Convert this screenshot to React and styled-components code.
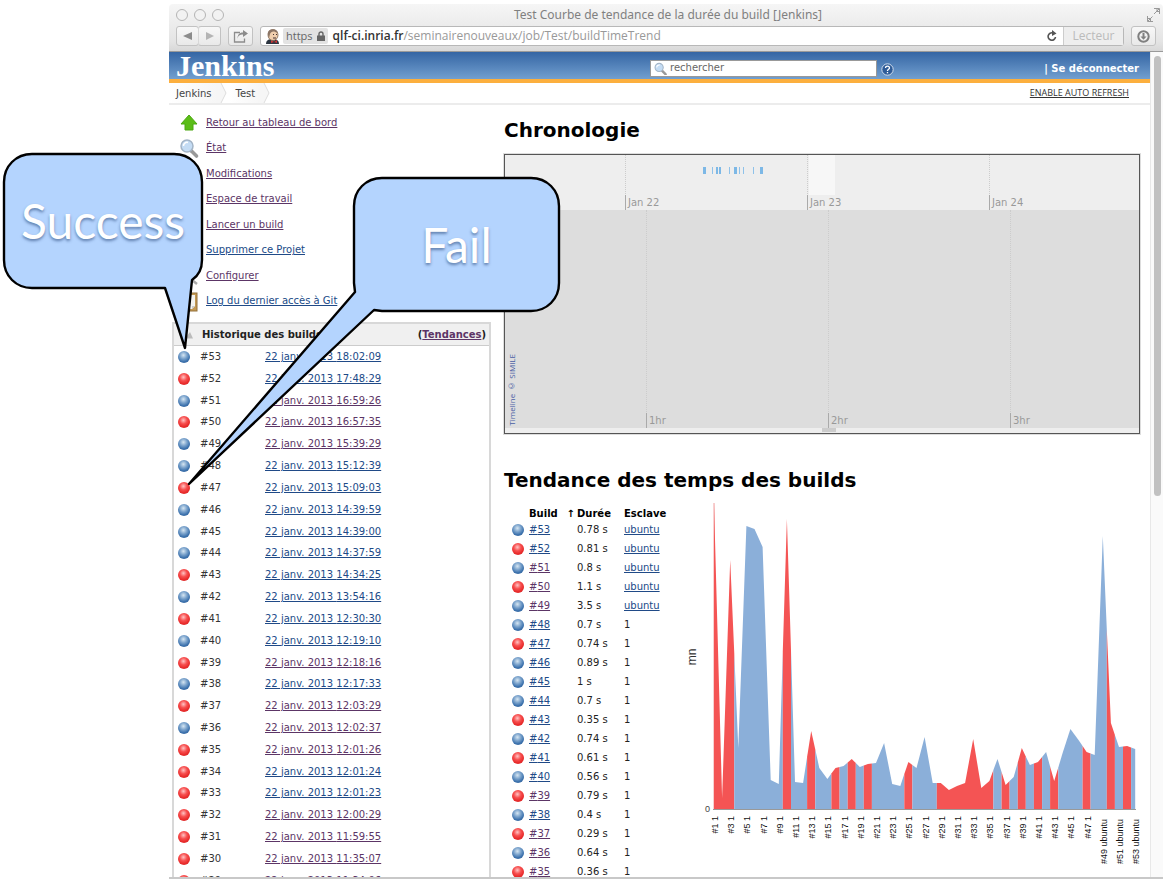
import React from "react";
import styled, { createGlobalStyle, css } from "styled-components";

const SANS = `"DejaVu Sans", Verdana, sans-serif`;
const CHROME = `"Open Sans", "Lucida Grande", sans-serif`;
const BLUE = "#204a87";
const VISITED = "#5c3566";

const GlobalStyle = createGlobalStyle`
  *, *::before, *::after { box-sizing: border-box; }
  html, body { margin: 0; height: 100%; background: #fff; overflow: hidden; }
  body { font-family: ${SANS}; font-size: 10px; line-height: 16px; color: #333; }
  ul, h1, h2 { margin: 0; padding: 0; list-style: none; }
  button, input { font: inherit; }
`;

const Stage = styled.div`
  position: relative;
  display: flex;
  height: 100vh;
  padding: 4px 11px 0 169px;
  overflow: hidden;
`;

const BrowserWindow = styled.div`
  flex: 1;
  min-width: 0;
  display: flex;
  flex-direction: column;
  border-radius: 4px 4px 0 0;
  border-bottom: 2px solid #c8c8c8;
  overflow: hidden;
`;

const Chrome = styled.div`
  flex: none;
  background: linear-gradient(#f6f6f6, #e4e4e4 80%, #d8d8d8);
  border-bottom: 1px solid #9a9a9a;
  font-family: ${CHROME};
  font-size: 12px;
`;

const TitleBar = styled.div`
  display: grid;
  grid-template-columns: 80px 1fr 80px;
  align-items: center;
  height: 21px;
  padding: 0 3px 0 7px;
  text-align: center;
  font-family: "Noto Sans", sans-serif;
  color: #808080;
`;

const Lights = styled.div`
  display: flex;
  gap: 6px;
`;

const Light = styled.span`
  width: 12px;
  height: 12px;
  border: 1px solid #b4b4b4;
  border-radius: 50%;
  background: #f2f2f2;
`;

const FullScreen = styled.svg`
  justify-self: end;
`;

const ToolBar = styled.div`
  display: flex;
  align-items: center;
  height: 26px;
  gap: 7px;
  padding: 0 7px 4px;
`;

const ButtonGroup = styled.div`
  display: flex;
`;

const ToolButton = styled.button`
  display: flex;
  align-items: center;
  justify-content: center;
  width: ${(p) => p.$width || 25}px;
  height: 20px;
  padding: 0;
  border: 1px solid #c2c2c2;
  border-radius: 3px;
  background: linear-gradient(#f8f8f8, #e9e9e9);
  color: #b0b0b0;
  & + & { border-left-color: #d8d8d8; margin-left: -1px; }
`;

const AddressBar = styled.div`
  flex: 1;
  display: flex;
  align-items: center;
  height: 20px;
  padding-left: 5px;
  border: 1px solid #b8b8b8;
  border-radius: 3px;
  background: #fff;
`;

const Secure = styled.span`
  display: flex;
  align-items: center;
  gap: 4px;
  height: 16px;
  margin: 0 5px 0 4px;
  padding: 0 3px;
  border-radius: 2px;
  background: #e3e3e3;
  color: #666;
  font-size: 11px;
`;

const Url = styled.span`
  flex: 1;
  color: #999;
  b { color: #333; font-weight: 600; }
`;

const Reader = styled.button`
  width: 60px;
  height: 18px;
  margin-left: 6px;
  padding: 0;
  border: 0;
  border-left: 1px solid #ccc;
  background: #eee;
  color: #bbb;
  line-height: 16px;
`;

const Viewport = styled.div`
  flex: 1;
  min-height: 0;
  display: flex;
`;

const Page = styled.div`
  flex: 1;
  min-width: 0;
  display: flex;
  flex-direction: column;
`;

const ScrollTrack = styled.div`
  width: 13px;
  padding: 4px 3px;
  background: #fafafa;
  border-left: 1px solid #e8e8e8;
`;

const ScrollThumb = styled.div`
  width: 7px;
  height: 440px;
  border-radius: 4px;
  background: #c1c1c1;
`;

const Header = styled.header`
  flex: none;
  display: flex;
  align-items: center;
  height: 31px;
  padding: 0 11px 0 7px;
  border-bottom: 4px solid #fcaf3e;
  background: linear-gradient(#3465a4, #729fcf);
  color: #fff;
`;

const Logo = styled.a`
  width: 474px;
  font: bold 30px/34px "Liberation Serif", serif;
  color: #fff;
  text-decoration: none;
`;

const SearchBox = styled.label`
  display: flex;
  align-items: center;
  width: 227px;
  height: 17px;
  margin-top: 5px;
  padding: 0 3px;
  gap: 3px;
  border: 1px solid #999;
  background: #fff;
`;

const SearchInput = styled.input`
  flex: 1;
  min-width: 0;
  padding: 0;
  border: 0;
  outline: 0;
  background: transparent;
  color: #555;
  font-size: 10px;
  &::placeholder { color: #666; opacity: 1; }
`;

const HelpIcon = styled.svg`
  margin: 8px 0 0 4px;
`;

const LogOut = styled.div`
  margin: 6px 0 0 auto;
  font-weight: bold;
  a { color: #fff; text-decoration: none; }
`;

const Breadcrumbs = styled.nav`
  flex: none;
  display: flex;
  align-items: center;
  height: 22px;
  padding: 0 21px 0 0;
  border-bottom: 2px solid #ececec;
`;

const Crumb = styled.a`
  height: 20px;
  padding: 1px 5px 0 7px;
  line-height: 20px;
  background: linear-gradient(90deg, #fff, #f6f6f6);
  color: #444;
  text-decoration: none;
`;

const AutoRefresh = styled.a`
  margin-left: auto;
  font-family: ${CHROME};
  font-size: 9px;
  color: #333;
`;

const Columns = styled.div`
  flex: 1;
  min-height: 0;
  display: flex;
  align-items: flex-start;
  overflow: hidden;
`;

const Sidebar = styled.aside`
  flex: none;
  width: 322px;
  padding: 5px 0 0 3px;
`;

const Tasks = styled.ul`
  display: grid;
  grid-auto-rows: 1fr;
  height: 204px;
  margin-bottom: 8px;
  padding-left: 8px;
`;

const Task = styled.li`
  display: flex;
  align-items: center;
  gap: 8px;
`;

const TaskIcon = styled.svg`
  flex: none;
  width: 18px;
  height: 20px;
  overflow: visible;
`;

const Link = styled.a`
  color: ${(p) => (p.$visited ? VISITED : BLUE)};
`;

const History = styled.section`
  border: 2px solid #d8d8d8;
  border-width: 2px 2px 0;
`;

const HistoryHead = styled.h2`
  display: flex;
  align-items: center;
  height: 22px;
  padding: 0 3px 0 10px;
  border-bottom: 1px solid #ccc;
  background: #f0f0f0;
  font-size: 10px;
  color: #222;
`;

const HistoryTitle = styled.span`
  margin-left: 9px;
  flex: 1;
`;

const HistoryTable = styled.table`
  width: 100%;
  height: 546px;
  border-collapse: collapse;
  table-layout: fixed;
  td { padding: 0; }
  td:nth-child(1) { width: 26px; padding-left: 4px; }
  td:nth-child(2) { width: 65px; }
`;

const Ball = styled.span`
  display: block;
  width: 12px;
  height: 12px;
  border-radius: 50%;
  ${(p) =>
    p.$failed
      ? css`
          background: radial-gradient(circle at 45% 35%, #ffc4c4 0, #f75050 35%, #e82a2a 65%, #c83a3a 100%);
        `
      : css`
          background: radial-gradient(circle at 45% 35%, #d6e6f2 0, #7ba3cc 35%, #3a70ac 65%, #446a96 100%);
        `}
`;

const Main = styled.main`
  flex: 1;
  min-width: 0;
  padding: 0 10px 0 13px;
`;

const Heading = styled.h1`
  margin: ${(p) => (p.$first ? "13px 0 12px" : "34px 0 5px")};
  font-size: 20px;
  line-height: 24px;
  color: #000;
`;

const Timeline = styled.div`
  position: relative;
  border: 1px solid #555;
  outline: 1px solid #ddd;
  color: #999;
`;

const Band = styled.div`
  position: relative;
  display: grid;
  grid-template-columns: ${(p) => p.$first}px 182px 182px 1fr;
  height: ${(p) => p.$height}px;
  background: ${(p) => p.$color};
`;

const Period = styled.div`
  display: flex;
  align-items: flex-end;
  border-left: 1px dotted #ccc;
  &:first-child { border-left: 0; }
`;

const PeriodLabel = styled.span`
  margin-left: -1px;
  padding-left: 2px;
  border-left: 1px solid #aaa;
  line-height: 15px;
`;

const VisibleRange = styled.div`
  position: absolute;
  top: 0;
  left: 304px;
  width: 26px;
  height: 40px;
  background: #f7f7f7;
`;

const Events = styled.svg`
  position: absolute;
  top: 12px;
  left: 198px;
`;

const Grip = styled.div`
  height: 5px;
  background: #eee;
  &::before {
    content: "";
    display: block;
    width: 14px;
    height: 4px;
    margin-left: 50%;
    background: #ccc;
  }
`;

const Copyright = styled.a`
  position: absolute;
  left: 2px;
  bottom: 7px;
  writing-mode: vertical-rl;
  transform: rotate(180deg);
  font-family: ${CHROME};
  font-size: 8px;
  line-height: 10px;
  color: #4a5da5;
  text-decoration: none;
`;

const Trend = styled.section`
  display: flex;
  align-items: flex-start;
`;

const TrendTable = styled.table`
  flex: none;
  width: 182px;
  margin-top: 10px;
  border-collapse: collapse;
  table-layout: fixed;
  color: #222;
  th { height: 13px; padding: 0; text-align: left; line-height: 13px; color: #000; }
  td { height: 19px; padding: 0; }
  td:first-child { padding-left: 8px; }
  th:nth-child(1) { width: 25px; }
  th:nth-child(2) { width: 48px; }
  th:nth-child(3) { width: 47px; }
`;

const SortHeader = styled.span`
  display: flex;
  justify-content: space-between;
  padding-right: 2px;
`;

const Chart = styled.svg`
  flex: none;
  font-family: "Liberation Sans", sans-serif;
`;

const CalloutBox = styled.div`
  position: absolute;
  left: ${(p) => p.$left}px;
  top: ${(p) => p.$top}px;
  width: ${(p) => p.$width}px;
  height: 134px;
  display: flex;
  align-items: center;
  justify-content: center;
  font: 48px/56px Lato, "Gill Sans", sans-serif;
  color: #fff;
  text-shadow: 0 2px 3px rgba(40, 70, 120, 0.6);
`;

const Bubble = styled.svg`
  position: absolute;
  left: 0;
  top: 0;
  overflow: visible;
  fill: #b4d4fe;
  stroke: #000;
  stroke-width: 2.4;
`;

const CalloutText = styled.span`
  position: relative;
`;

const visitedBuilds = new Set([51, 50, 49, 39, 37, 36, 35, 32, 31, 30, 29]);
const failedBuilds = new Set([
  1, 2, 3, 10, 13, 16, 18, 20, 25, 29, 30, 31, 32, 33, 34, 35, 37, 39, 41, 43, 47, 50, 52,
]);

const historyTimes = [
  "18:02:09", "17:48:29", "16:59:26", "16:57:35", "15:39:29", "15:12:39", "15:09:03",
  "14:39:59", "14:39:00", "14:37:59", "14:34:25", "13:54:16", "12:30:30", "12:19:10",
  "12:18:16", "12:17:33", "12:03:29", "12:02:37", "12:01:26", "12:01:24", "12:01:23",
  "12:00:29", "11:59:55", "11:35:07", "11:34:06",
];

const durations = [
  "0.78", "0.81", "0.8", "1.1", "3.5", "0.7", "0.74", "0.89", "1", "0.7", "0.35", "0.74",
  "0.61", "0.56", "0.79", "0.4", "0.29", "0.64", "0.36",
];

/* Height of the curve above the zero line, one value per build */
const heights = [
  306, 11, 249, 61, 283, 280, 262, 29, 25, 290, 27, 26, 78, 41, 30, 41, 43, 50, 42, 45, 46, 66,
  25, 23, 47, 41, 72, 26, 26, 19, 23, 26, 70, 21, 28, 50, 24, 32, 61, 44, 47, 57, 28, 55, 80, 69,
  57, 54, 273, 86, 62, 63, 60,
];

const CHART_LEFT = 28;
const CHART_BASE = 312;
const STEP = 8.1;

/* Neighbouring builds with the same result share one area */
const runs = heights.reduce((list, _, i) => {
  const failed = failedBuilds.has(i + 1);
  const last = list[list.length - 1];
  if (last && last.failed === failed) last.end = i;
  else list.push({ failed, start: i, end: i });
  return list;
}, []);

function areaPath({ start, end }) {
  const xAt = (i) => CHART_LEFT + i * STEP;
  const yAt = (h) => CHART_BASE - h;
  const mid = (i) => yAt((heights[i] + heights[i + 1]) / 2);
  const from = start > 0 ? xAt(start - 0.5) : xAt(start);
  const to = end < heights.length - 1 ? xAt(end + 0.5) : xAt(end);
  const pts = [[from, CHART_BASE]];
  if (start > 0) pts.push([from, mid(start - 1)]);
  for (let i = start; i <= end; i++) pts.push([xAt(i), yAt(heights[i])]);
  if (end < heights.length - 1) pts.push([to, mid(end)]);
  pts.push([to, CHART_BASE]);
  return "M" + pts.map((p) => p.map((n) => n.toFixed(1)).join(" ")).join("L") + "Z";
}

function DurationChart() {
  return (
    <Chart width="454" height="370" viewBox="0 0 454 370" role="img" aria-label="mn">
      <path d="M28 6V312" stroke="#f0a0a0" />
      {runs.map((run) => (
        <path key={run.start} d={areaPath(run)} fill={run.failed ? "#f45454" : "#8bafd9"} />
      ))}
      <path d="M27 312.500H450" fill="none" stroke="#999" />
      <text x="24" y="315" fontSize="9" textAnchor="end" fill="#444">0</text>
      <text transform="translate(10 160) rotate(-90)" fontSize="12" textAnchor="middle" fill="#333">mn</text>
      {heights.map((_, i) => {
        const n = i + 1;
        if (n % 2 === 0) return null;
        const ubuntu = n >= 49;
        return (
          <text
            key={n}
            transform={`translate(${(CHART_LEFT + i * STEP + 4).toFixed(1)} ${ubuntu ? 322 : 319}) rotate(-90)`}
            fontSize="9"
            textAnchor="end"
            fill="#111"
          >
            {`#${n} ${ubuntu ? "ubuntu" : "1"}`}
          </text>
        );
      })}
    </Chart>
  );
}

const Magnifier = () => (
  <>
    <path d="M11.500 13L16.500 18" stroke="#999" strokeWidth="3.600" strokeLinecap="round" />
    <circle cx="7" cy="8" r="6" fill="#c4dcf4" stroke="#a3b4c6" strokeWidth="1.500" />
    <path d="M3.500 8A3.500 3.500 0 0 1 8 4.500" fill="none" stroke="#fff" strokeWidth="1.500" />
  </>
);

const tasks = [
  { text: "Retour au tableau de bord", visited: true, icon: <path d="M9 2L17 11H13V17H5V11H1Z" fill="#5bbd17" stroke="#4ca812" /> },
  { text: "État", visited: true, icon: <Magnifier /> },
  { text: "Modifications", visited: true },
  { text: "Espace de travail", visited: true },
  { text: "Lancer un build", visited: true },
  { text: "Supprimer ce Projet" },
  { text: "Configurer", visited: true, icon: <path d="M12 14L17 18" stroke="#aaa" strokeWidth="2.500" /> },
  {
    text: "Log du dernier accès à Git",
    icon: (
      <>
        <rect x="2" y="2" width="15" height="18" fill="#c39a55" stroke="#94713a" />
        <path d="M4 4H15V15L12 18H4Z" fill="#f4f4f0" />
        <path d="M15 15H12V18Z" fill="#ccc" />
      </>
    ),
  },
];

function BuildTrendRow({ build, duration }) {
  return (
    <tr>
      <td><Ball $failed={failedBuilds.has(build)} /></td>
      <td><Link href="#build" $visited={visitedBuilds.has(build)}>#{build}</Link></td>
      <td>{duration} s</td>
      <td>{build >= 49 ? <Link href="#ubuntu">ubuntu</Link> : "1"}</td>
    </tr>
  );
}

function Callout({ left, top, width, path, children }) {
  return (
    <CalloutBox $left={left} $top={top} $width={width}>
      <Bubble width={width} height="134" aria-hidden="true"><path d={path} strokeLinejoin="round" /></Bubble>
      <CalloutText>{children}</CalloutText>
    </CalloutBox>
  );
}

const CrumbArrow = () => (
  <svg width="12" height="20">
    <path d="M0 0H4L9 10L4 20H0Z" fill="#f6f6f6" />
    <path d="M4 0L9 10L4 20" fill="none" stroke="#ddd" />
  </svg>
);

const eventMarks = [[0, 3], [9, 1], [13, 2], [16, 2], [26, 1], [31, 3], [36, 1], [40, 1], [50, 1], [57, 3]];

export default function App() {
  return (
    <>
      <GlobalStyle />
      <Stage>
        <BrowserWindow>
          <Chrome>
            <TitleBar>
              <Lights><Light /><Light /><Light /></Lights>
              <span>Test Courbe de tendance de la durée du build [Jenkins]</span>
              <FullScreen width="13" height="14" viewBox="0 0 13 14" fill="none" stroke="#999">
                <path d="M7 .5H12.500V6M12 1L7 6M10 .5V3.500H12.500M.5 8V13.500H6M1 13L5.500 8.500M.5 10.500H3.500V13.500" />
              </FullScreen>
            </TitleBar>
            <ToolBar>
              <ButtonGroup>
                <ToolButton $width={23} aria-label="Précédent"><svg width="10" height="8"><path d="M0 4L9 0V8Z" fill="#8c8c8c" /></svg></ToolButton>
                <ToolButton $width={23} aria-label="Suivant"><svg width="10" height="8"><path d="M9 4L1 0V8Z" fill="#b4b4b4" /></svg></ToolButton>
              </ButtonGroup>
              <ToolButton aria-label="Partager">
                <svg width="16" height="13" viewBox="0 0 16 13" fill="none" stroke="#8c8c8c" strokeWidth="1.300">
                  <path d="M7 2.500H1.500V12H11.500V8.500" />
                  <path d="M4.500 9C5 5.500 7 4.500 10 4.500V7L15 3.500L10 0V2.500C6 2.500 4.500 5 4.500 9Z" fill="#8c8c8c" stroke="none" />
                </svg>
              </ToolButton>
              <AddressBar>
                <svg width="13" height="15" viewBox="0 0 13 15">
                  <path d="M0 15C0 11 3 10 6.500 10S13 11 13 15Z" fill="#2c3540" />
                  <path d="M5 11L8 13L11 11V14L8 13L5 14Z" fill="#c33" />
                  <ellipse cx="7" cy="6" rx="5" ry="5.500" fill="#f0cfae" stroke="#7d6450" strokeWidth=".8" />
                  <path d="M2 6C1 2 4 0 7 .5C10 .5 12 2 11.500 4C8 1.500 5 2 4 5L3 9Z" fill="#8b7565" />
                  <path d="M7 5.500H8M10 5.500H11M7 9H10" stroke="#433" />
                </svg>
                <Secure>
                  https
                  <svg width="8" height="10"><path d="M2 5V3A2 2 0 0 1 6 3V5" fill="none" stroke="#666" strokeWidth="1.400" /><rect y="4.500" width="8" height="5.500" fill="#666" /></svg>
                </Secure>
                <Url><b>qlf-ci.inria.fr</b>/seminairenouveaux/job/Test/buildTimeTrend</Url>
                <svg width="10" height="12" viewBox="0 0 10 12"><path d="M8.500 7A3.700 3.700 0 1 1 6 3" fill="none" stroke="#555" strokeWidth="1.600" /><path d="M5 0L9.500 3.500L5 6Z" fill="#555" /></svg>
                <Reader>Lecteur</Reader>
              </AddressBar>
              <ToolButton aria-label="Téléchargements">
                <svg width="13" height="13" viewBox="0 0 13 13"><circle cx="6.500" cy="6.500" r="5.200" fill="none" stroke="#808080" strokeWidth="2" /><path d="M5.500 3H7.500V6.500H9.500L6.500 9.800L3.500 6.500H5.500Z" fill="#808080" /></svg>
              </ToolButton>
            </ToolBar>
          </Chrome>
          <Viewport>
            <Page>
              <Header>
                <Logo href="#home">Jenkins</Logo>
                <SearchBox>
                  <svg width="13" height="13" viewBox="0 0 18 19"><Magnifier /></svg>
                  <SearchInput placeholder="rechercher" aria-label="rechercher" />
                </SearchBox>
                <HelpIcon width="13" height="13" viewBox="0 0 13 13">
                  <circle cx="6.500" cy="6.500" r="5.700" fill="#2f5c98" stroke="#cfdcec" />
                  <path d="M4.500 5C4.500 2.500 8.500 2.500 8.500 5C8.500 6.300 6.500 6.300 6.500 8M6.500 9V10.200" fill="none" stroke="#fff" strokeWidth="1.300" />
                </HelpIcon>
                <LogOut>| <a href="#logout">Se déconnecter</a></LogOut>
              </Header>
              <Breadcrumbs>
                <Crumb href="#jenkins">Jenkins</Crumb>
                <CrumbArrow />
                <Crumb href="#test">Test</Crumb>
                <CrumbArrow />
                <AutoRefresh href="#refresh">ENABLE AUTO REFRESH</AutoRefresh>
              </Breadcrumbs>
              <Columns>
                <Sidebar>
                  <Tasks>
                    {tasks.map((t) => (
                      <Task key={t.text}>
                        <TaskIcon viewBox="0 0 18 20" aria-hidden="true">{t.icon}</TaskIcon>
                        <Link href="#task" $visited={t.visited}>{t.text}</Link>
                      </Task>
                    ))}
                  </Tasks>
                  <History>
                    <HistoryHead>
                      <svg width="9" height="8"><path d="M1 7.500H9L6 1Z" fill="#bbb" /></svg>
                      <HistoryTitle>Historique des builds</HistoryTitle>
                      (<Link href="#trend" $visited>Tendances</Link>)
                    </HistoryHead>
                    <HistoryTable>
                      <tbody>
                        {historyTimes.map((time, i) => (
                          <tr key={time}>
                            <td><Ball $failed={failedBuilds.has(53 - i)} /></td>
                            <td>#{53 - i}</td>
                            <td><Link href="#build" $visited={visitedBuilds.has(53 - i)}>22 janv. 2013 {time}</Link></td>
                          </tr>
                        ))}
                      </tbody>
                    </HistoryTable>
                  </History>
                </Sidebar>
                <Main>
                  <Heading $first>Chronologie</Heading>
                  <Timeline>
                    <Band $first={120} $height={55} $color="#eee">
                      <Period />
                      <Period><PeriodLabel>Jan 22</PeriodLabel></Period>
                      <Period><PeriodLabel>Jan 23</PeriodLabel></Period>
                      <Period><PeriodLabel>Jan 24</PeriodLabel></Period>
                      <VisibleRange />
                      <Events width="62" height="7">
                        {eventMarks.map(([x, w]) => (
                          <rect key={x} x={x} width={w} height="7" fill={w > 1 ? "#7db8e6" : "#8fc2ea"} />
                        ))}
                      </Events>
                    </Band>
                    <Band $first={141} $height={218} $color="#ddd">
                      <Period />
                      <Period><PeriodLabel>1hr</PeriodLabel></Period>
                      <Period><PeriodLabel>2hr</PeriodLabel></Period>
                      <Period><PeriodLabel>3hr</PeriodLabel></Period>
                    </Band>
                    <Grip />
                    <Copyright href="#simile">Timeline © SIMILE</Copyright>
                  </Timeline>
                  <Heading>Tendance des temps des builds</Heading>
                  <Trend>
                    <TrendTable>
                      <thead>
                        <tr>
                          <th />
                          <th><SortHeader>Build <span>↑</span></SortHeader></th>
                          <th>Durée</th>
                          <th>Esclave</th>
                        </tr>
                      </thead>
                      <tbody>
                        {durations.map((d, i) => (
                          <BuildTrendRow key={i} build={53 - i} duration={d} />
                        ))}
                      </tbody>
                    </TrendTable>
                    <DurationChart />
                  </Trend>
                </Main>
              </Columns>
            </Page>
            <ScrollTrack><ScrollThumb /></ScrollTrack>
          </Viewport>
        </BrowserWindow>
        <Callout
          left={4}
          top={154}
          width={198}
          path="M28 0H170C186 0 198 12 198 28V106C198 116 194 122 188 126L181 194L161 134H28C12 134 0 122 0 106V28C0 12 12 0 28 0Z"
        >
          Success
        </Callout>
        <Callout
          left={354}
          top={178}
          width={205}
          path="M28 0H177C193 0 205 12 205 28V105C205 121 193 133 177 133H28L20 132L-165 306L1 114L0 105V28C0 12 12 0 28 0Z"
        >
          Fail
        </Callout>
      </Stage>
    </>
  );
}
